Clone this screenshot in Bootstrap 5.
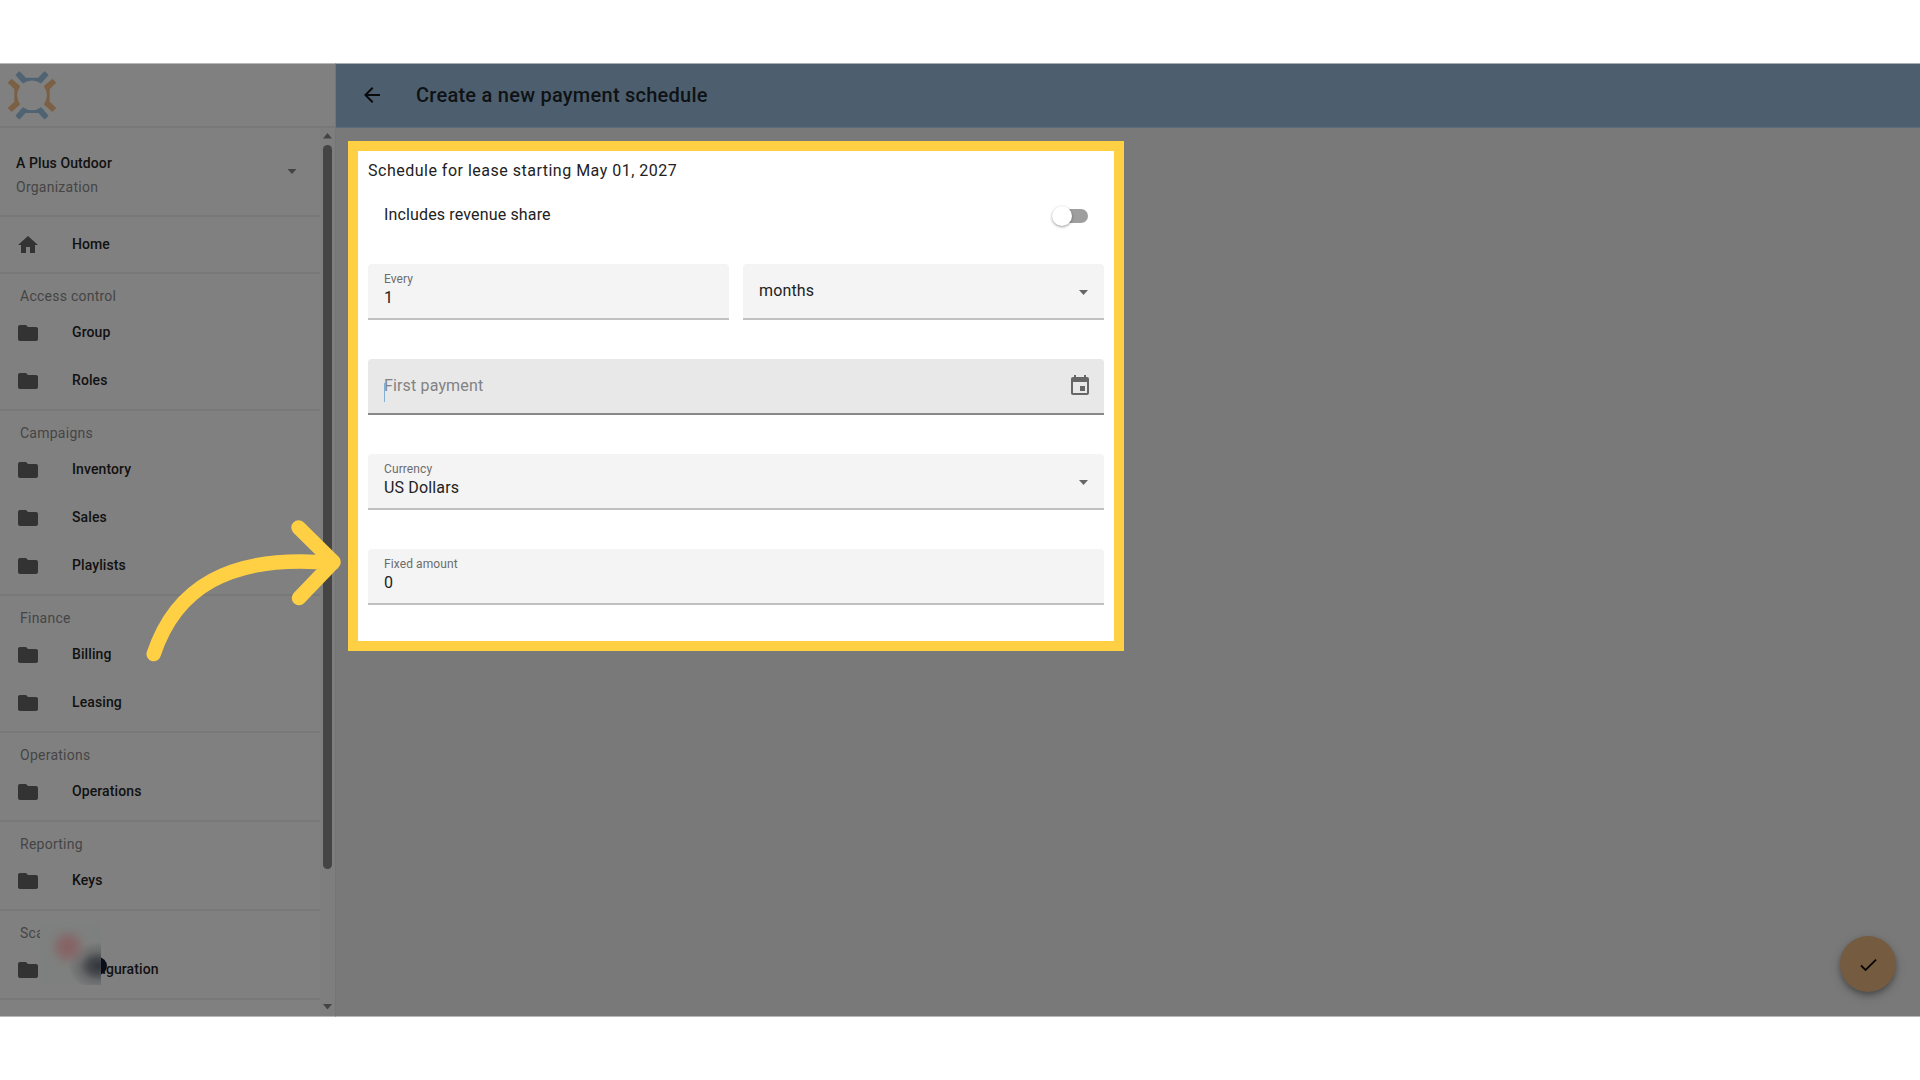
<!DOCTYPE html>
<html lang="en">
<head>
<meta charset="utf-8">
<meta name="viewport" content="width=device-width, initial-scale=1">
<title>Create a new payment schedule</title>
<link href="https://cdn.jsdelivr.net/npm/bootstrap@5.3.0/dist/css/bootstrap.min.css" rel="stylesheet">
<style>
  body { font-family: Roboto, "Liberation Sans", sans-serif; height: 1080px; overflow: hidden; background: #fff; color: #222; padding: 63px 0; }
  .shell { height: 954px; }
  .side { width: 336px; background: #808080; border-right: 1px solid #757575; border-top: 1px solid #b8b8b8; border-bottom: 1px solid #b8b8b8; color: #111; }
  .brand { height: 64px; border-bottom: 2px solid #787878; }
  .brand svg { width: 64px; height: 64px; }
  .nav-scroll { width: 320px; }
  .org { height: 89px; border-bottom: 2px solid #787878; padding: 23px 21px 0 16px; }
  .org-name { font-size: 14px; font-weight: 500; line-height: 24px; letter-spacing: .1px; }
  .org-kind { font-size: 14px; line-height: 24px; letter-spacing: .25px; color: #454545; }
  .sect { border-bottom: 2px solid #787878; padding-bottom: 4px; }
  .sect-title { height: 35px; padding: 12px 0 0 20px; font-size: 14px; line-height: 20px; letter-spacing: .25px; color: #454545; }
  .item { height: 48px; padding-left: 16px; font-size: 14px; font-weight: 500; letter-spacing: .1px; }
  .item span { padding-bottom: 1px; }
  .item svg { width: 24px; height: 24px; fill: #333; margin-right: 32px; }
  .item-home { height: 47px; }
  .bar-col { width: 15px; background: #7e7e7e; padding: 5px 3px 6px 3px; }
  .thumb { width: 9px; height: 724px; border-radius: 5px; background: #444; margin: 6px 0 0; }
  .main { background: #797979; border-bottom: 1px solid #b8b8b8; }
  .topbar { height: 65px; background: #4d5f6e; border-top: 1px solid #a6afb6; border-bottom: 1px solid #5c6c79; padding: 0 0 1px 24px; color: #0f1214; }
  .topbar h1 { font-size: 20px; font-weight: 500; letter-spacing: .25px; margin: 0 0 0 32px; }
  .work { padding: 13px 0 0 12px; }
  .panel { width: 776px; height: 510px; border: 10px solid #ffd044; background: #fff; padding: 10px 10px 0; }
  .lead-line { font-size: 16px; line-height: 20px; letter-spacing: .5px; }
  .share { height: 48px; margin-top: 10px; padding: 0 16px; font-size: 16px; letter-spacing: .15px; }
  .track { width: 32px; height: 14px; border-radius: 7px; background: #9e9e9e; margin-top: 1px; }
  .knob { width: 20px; height: 20px; border-radius: 50%; background: #fff; top: -3px; left: -4px; box-shadow: 0 1px 3px rgba(0,0,0,.3), 0 1px 2px rgba(0,0,0,.12); }
  .fields { margin-top: 25px; gap: 39px; }
  .fld { height: 56px; background: #f4f4f4; border-radius: 4px 4px 0 0; border-bottom: 2px solid #c0c0c0; padding: 0 16px; font-size: 16px; color: #222; }
  .fld.hot { background: #e8e8e8; border-bottom-color: #888; color: #828282; }
  .fld-cap { font-size: 12px; line-height: 14px; color: #6c6c6c; letter-spacing: .1px; padding-top: 8px; }
  .fld-val { line-height: 24px; letter-spacing: .15px; }
  .drop { margin-top: 2px; }
  .cal { margin-right: -4px; }
  .caret { left: 16px; top: 24px; width: 1px; height: 19px; background: #7fb0d4; }
  .fab { width: 56px; height: 56px; background: #755b3f; right: 24px; top: 936px; box-shadow: 0 3px 5px rgba(0,0,0,.25), 0 4px 12px rgba(0,0,0,.18); }
  .pointer-arrow { left: 130px; top: 500px; }
  .dot { width: 18px; height: 18px; left: 89px; top: 957px; background: #0a0e18; border-radius: 50%; }
  .veil { left: 40px; top: 922px; width: 61px; height: 63px; background:
      radial-gradient(circle at 28px 25px, rgba(135,95,97,.95) 0, rgba(135,98,100,.75) 8px, rgba(130,115,115,.25) 17px, rgba(128,124,124,0) 23px),
      radial-gradient(ellipse 30px 24px at 58px 44px, #33363c 0, #44474b 30%, rgba(95,97,99,.75) 60%, rgba(126,128,127,0) 100%), #7e807f; }
</style>
<script src="https://cdn.jsdelivr.net/npm/bootstrap@5.3.0/dist/js/bootstrap.bundle.min.js"></script>
</head>
<body class="position-relative">
<svg class="d-none">
  <symbol id="folder" viewBox="0 0 24 24"><path d="M10 4H4c-1.100 0-2 .9-2 2v12c0 1.100.9 2 2 2h16c1.100 0 2-.9 2-2V8c0-1.100-.9-2-2-2h-8l-2-2z"/></symbol>
</svg>
<div class="shell d-flex">
  <aside class="side d-flex flex-column flex-shrink-0 overflow-hidden">
    <div class="brand flex-shrink-0">
      <svg viewBox="0 42 192 192"><g transform="translate(96 136)" stroke-width="4" stroke-linejoin="round">
        <g fill="#4f6373" stroke="#4f6373"><path id="arm" d="M-47-61-38-70-20-51H20L38-70 47-61 27-38A46 46 0 0 0-27-38Z"/><use href="#arm" transform="rotate(180)"/></g>
        <g fill="#7b6043" stroke="#7b6043"><path d="M-47-61-38-70-20-51H20L38-70 47-61 27-38A46 46 0 0 0-27-38Z" transform="rotate(90)"/><path d="M-47-61-38-70-20-51H20L38-70 47-61 27-38A46 46 0 0 0-27-38Z" transform="rotate(-90)"/></g>
      </g></svg>
    </div>
    <div class="d-flex flex-grow-1">
      <nav class="nav-scroll">
        <div class="org d-flex justify-content-between">
          <div><div class="org-name">A Plus Outdoor</div><div class="org-kind">Organization</div></div>
          <svg class="mt-1" width="14" height="30" viewBox="0 0 14 30"><path d="M2.500 14h9l-4.500 5z" fill="#444"/></svg>
        </div>
        <div class="sect pt-1"><div class="item item-home d-flex align-items-center"><svg viewBox="0 0 24 24"><path d="M10 20v-6h4v6h5v-8h3L12 3 2 12h3v8z"/></svg><span>Home</span></div></div>
        <div class="sect"><div class="sect-title">Access control</div>
          <div class="item d-flex align-items-center"><svg><use href="#folder"/></svg><span>Group</span></div>
          <div class="item d-flex align-items-center"><svg><use href="#folder"/></svg><span>Roles</span></div></div>
        <div class="sect"><div class="sect-title">Campaigns</div>
          <div class="item d-flex align-items-center"><svg><use href="#folder"/></svg><span>Inventory</span></div>
          <div class="item d-flex align-items-center"><svg><use href="#folder"/></svg><span>Sales</span></div>
          <div class="item d-flex align-items-center"><svg><use href="#folder"/></svg><span>Playlists</span></div></div>
        <div class="sect"><div class="sect-title">Finance</div>
          <div class="item d-flex align-items-center"><svg><use href="#folder"/></svg><span>Billing</span></div>
          <div class="item d-flex align-items-center"><svg><use href="#folder"/></svg><span>Leasing</span></div></div>
        <div class="sect"><div class="sect-title">Operations</div>
          <div class="item d-flex align-items-center"><svg><use href="#folder"/></svg><span>Operations</span></div></div>
        <div class="sect"><div class="sect-title">Reporting</div>
          <div class="item d-flex align-items-center"><svg><use href="#folder"/></svg><span>Keys</span></div></div>
        <div class="sect"><div class="sect-title">Sca</div>
          <div class="item d-flex align-items-center"><svg><use href="#folder"/></svg><span>Configuration</span></div></div>
      </nav>
      <div class="bar-col d-flex flex-column">
        <svg width="9" height="6" viewBox="0 0 9 6"><path d="M0 5.500h9L4.500 0z" fill="#444"/></svg>
        <div class="thumb"></div>
        <svg class="mt-auto" width="9" height="6" viewBox="0 0 9 6"><path d="M0 0h9L4.500 5.500z" fill="#444"/></svg>
      </div>
    </div>
  </aside>
  <main class="main flex-grow-1">
    <header class="topbar d-flex align-items-center">
      <svg width="24" height="24" viewBox="0 0 24 24"><path d="M20 11H7.830l5.590-5.590L12 4l-8 8 8 8 1.410-1.410L7.830 13H20v-2z" fill="#080a0c"/></svg>
      <h1>Create a new payment schedule</h1>
    </header>
    <div class="work">
      <section class="panel">
        <div class="lead-line">Schedule for lease starting May 01, 2027</div>
        <div class="share d-flex align-items-center justify-content-between">Includes revenue share
          <div class="track position-relative"><div class="knob position-absolute"></div></div></div>
        <div class="fields d-flex flex-column">
          <div class="d-flex" style="gap:14px">
            <div class="fld flex-fill w-50"><div class="fld-cap">Every</div><div class="fld-val">1</div></div>
            <div class="fld flex-fill w-50 d-flex align-items-center justify-content-between"><span class="fld-val">months</span><svg class="drop" width="9" height="5" viewBox="0 0 9 5"><path d="M0 0h9L4.500 5z" fill="#666"/></svg></div>
          </div>
          <div class="fld hot position-relative d-flex align-items-center justify-content-between"><span class="fld-val">First payment</span><i class="caret position-absolute"></i>
            <svg class="cal" width="24" height="24" viewBox="0 0 24 24"><path d="M17 12h-5v5h5v-5zM16 1v2H8V1H6v2H5c-1.110 0-1.990.9-1.990 2L3 19c0 1.100.89 2 2 2h14c1.100 0 2-.9 2-2V5c0-1.100-.9-2-2-2h-1V1h-2zm3 18H5V8h14v11z" fill="#666"/></svg></div>
          <div class="fld d-flex align-items-center justify-content-between"><div class="align-self-start"><div class="fld-cap">Currency</div><div class="fld-val">US Dollars</div></div><svg class="drop" width="9" height="5" viewBox="0 0 9 5"><path d="M0 0h9L4.500 5z" fill="#666"/></svg></div>
          <div class="fld"><div class="fld-cap">Fixed amount</div><div class="fld-val">0</div></div>
        </div>
      </section>
    </div>
  </main>
</div>
<i class="dot position-absolute"></i><i class="veil position-absolute"></i>
<div class="fab position-absolute rounded-circle d-flex align-items-center justify-content-center">
  <svg width="24" height="24" viewBox="0 0 24 24"><path d="M9 16.170 4.830 12l-1.420 1.410L9 19 21 7l-1.410-1.410z" fill="#080604" transform="translate(1.200 1.700) scale(.93)"/></svg>
</div>
<svg class="pointer-arrow position-absolute" width="220" height="170" viewBox="130 500 220 170" fill="none" stroke="#ffd044" stroke-width="14.500" stroke-linecap="round" stroke-linejoin="round"><path d="M153.700 654C175 590 227 553 333 563M298.500 527.500 333.500 562 299 598"/></svg>
</body>
</html>
